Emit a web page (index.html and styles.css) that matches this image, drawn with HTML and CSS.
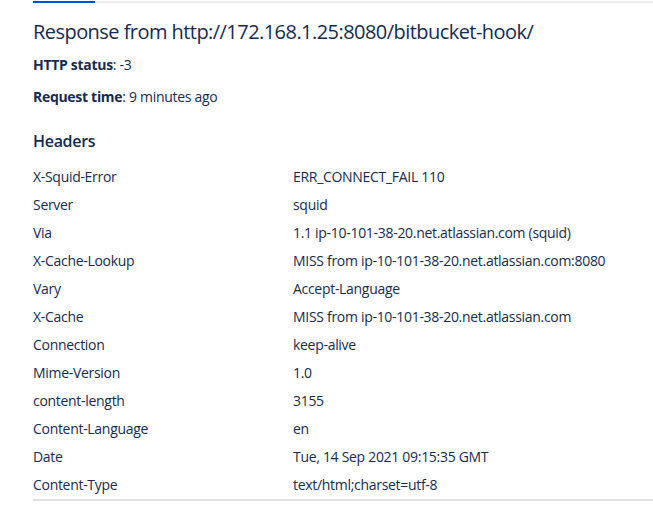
FILE: index.html
```html
<!DOCTYPE html>
<html>
<head>
<meta charset="utf-8">
<link rel="stylesheet" href="styles.css">
</head>
<body>
<div class="page">
  <div class="tabs"><div class="tab-active"></div></div>
  <h2 class="title">Response from http://172.168.1.25:8080/bitbucket-hook/</h2>
  <p class="meta"><strong>HTTP status</strong>: -3</p>
  <p class="meta"><strong>Request time</strong>: 9 minutes ago</p>
  <h3 class="headers-title">Headers</h3>
  <div class="headers">
    <div class="k">X-Squid-Error</div><div class="v">ERR_CONNECT_FAIL 110</div>
    <div class="k">Server</div><div class="v">squid</div>
    <div class="k">Via</div><div class="v">1.1 ip-10-101-38-20.net.atlassian.com (squid)</div>
    <div class="k">X-Cache-Lookup</div><div class="v">MISS from ip-10-101-38-20.net.atlassian.com:8080</div>
    <div class="k">Vary</div><div class="v">Accept-Language</div>
    <div class="k">X-Cache</div><div class="v">MISS from ip-10-101-38-20.net.atlassian.com</div>
    <div class="k">Connection</div><div class="v">keep-alive</div>
    <div class="k">Mime-Version</div><div class="v">1.0</div>
    <div class="k">content-length</div><div class="v">3155</div>
    <div class="k">Content-Language</div><div class="v">en</div>
    <div class="k">Date</div><div class="v">Tue, 14 Sep 2021 09:15:35 GMT</div>
    <div class="k">Content-Type</div><div class="v">text/html;charset=utf-8</div>
  </div>
  <div class="bottom-rule"></div>
</div>
</body>
</html>
```
FILE: styles.css
```css
html, body {
  margin: 0;
  padding: 0;
  background: #fff;
}
body {
  font-family: "Open Sans", "Noto Sans", sans-serif;
  color: #172b4d;
  font-size: 14px;
  letter-spacing: -0.3px;
}
.page {
  padding-left: 33px;
  padding-top: 1px;
}
.tabs {
  height: 2px;
  background: #ebecf0;
  display: flex;
}
.tab-active {
  width: 62px;
  background: #0052cc;
}
.title {
  margin: 17px 0 0;
  font-size: 20px;
  font-weight: 500;
  line-height: 24px;
  letter-spacing: -0.55px;
}
.meta {
  margin: 0;
  line-height: 20px;
}
.title + .meta { margin-top: 11px; }
.meta + .meta { margin-top: 12px; }
.meta strong { font-weight: 700; }
.headers-title {
  margin: 24px 0 0;
  font-size: 16px;
  font-weight: 600;
  line-height: 20px;
}
.headers {
  display: grid;
  grid-template-columns: 260px 1fr;
  grid-auto-rows: 28px;
  margin-top: 12px;
  line-height: 28px;
}
.bottom-rule {
  height: 2px;
  background: #dfe1e6;
}
```
